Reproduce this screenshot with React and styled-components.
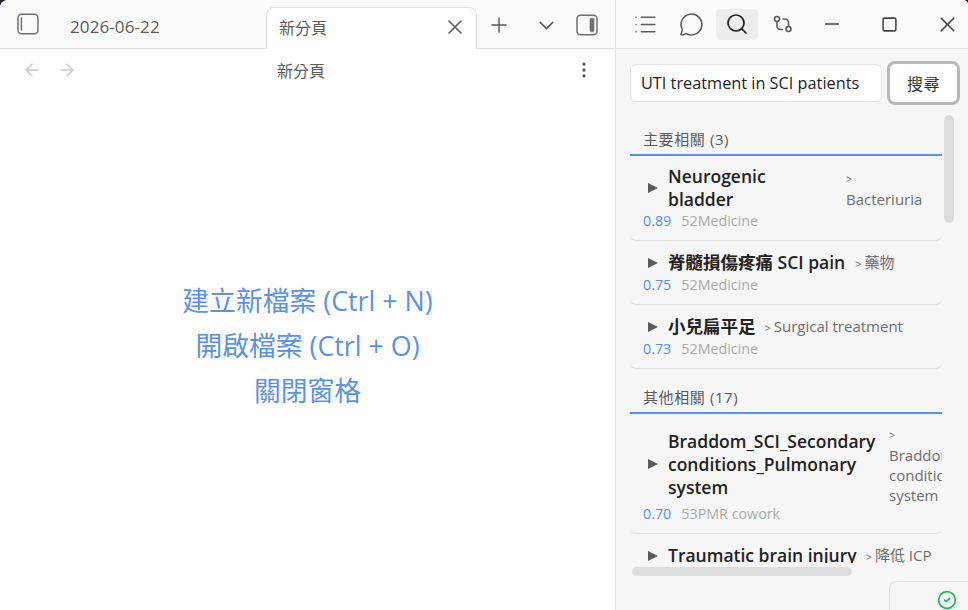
import styled, { createGlobalStyle } from "styled-components";
import {
  ArrowLeft,
  ArrowRight,
  ChevronDown,
  CircleCheck,
  EllipsisVertical,
  List,
  MessageCircle,
  Minus,
  Plus,
  Search,
  Square,
  X,
} from "lucide-react";

const GlobalStyle = createGlobalStyle`
  html, body {
    margin: 0;
    padding: 0;
    height: 100%;
    overflow: hidden;
    background: #1c2433;
  }
  #root {
    height: 100%;
  }
  * {
    box-sizing: border-box;
  }
`;

const Window = styled.div`
  width: 968px;
  height: 610px;
  display: flex;
  overflow: hidden;
  background: #fff;
  border-radius: 8px 5px 0 0;
  font-family: "Open Sans", "Noto Sans CJK TC", sans-serif;
  color: #5c5c5c;
`;

const MainPane = styled.div`
  width: 616px;
  flex-shrink: 0;
  display: flex;
  flex-direction: column;
  border-right: 1px solid #e3e3e3;
`;

const TabBar = styled.div`
  height: 49px;
  flex-shrink: 0;
  background: #fafafa;
  border-bottom: 1px solid #e0e0e0;
  display: flex;
  align-items: flex-end;
`;

const IconSlot = styled.div`
  width: ${(p) => p.$w || 34}px;
  height: 34px;
  display: flex;
  align-items: center;
  justify-content: center;
  flex-shrink: 0;
  color: ${(p) => p.$color || "#5c5c5c"};

  svg {
    flex-shrink: 0;
  }
`;

const TabBarLeft = styled.div`
  width: 266px;
  height: 48px;
  display: flex;
  align-items: center;
  padding-left: 11px;
  flex-shrink: 0;
`;

const DateTab = styled.span`
  margin: 5px 0 0 25px;
  font-size: 17px;
  letter-spacing: 0.1px;
  color: #5c5c5c;
`;

const ActiveTab = styled.div`
  width: 211px;
  height: 42px;
  margin-bottom: -1px;
  background: #fff;
  border: 1px solid #e0e0e0;
  border-bottom: none;
  border-radius: 8px 8px 0 0;
  display: flex;
  align-items: center;
  justify-content: space-between;
  padding: 0 9px 4px 12px;
  font-size: 16px;
  color: #5c5c5c;
`;

const TabBarRight = styled.div`
  flex: 1;
  height: 48px;
  display: flex;
  align-items: center;
  padding-left: 5px;
  padding-top: 2px;
`;

const PaneToggle = styled.div`
  display: flex;
`;

const NavBar = styled.div`
  height: 42px;
  display: grid;
  grid-template-columns: 1fr auto 1fr;
  align-items: center;
  padding: 0 21px 0 8px;
  flex-shrink: 0;
`;

const NavArrows = styled.div`
  display: flex;
  gap: 1px;
  padding-left: 7px;
`;

const NavMenu = styled.div`
  justify-self: end;
`;

const NavTitle = styled.div`
  font-size: 16px;
  color: #5c5c5c;
`;

const EmptyState = styled.div`
  flex: 1;
  display: flex;
  flex-direction: column;
  align-items: center;
  padding-top: 192px;
  gap: 9px;
`;

const EmptyAction = styled.div`
  font-size: 26.8px;
  line-height: 36px;
  color: #5a93e6;
`;

const SidePane = styled.div`
  flex: 1;
  min-width: 0;
  display: flex;
  flex-direction: column;
  background: #f6f6f6;
  position: relative;
`;

const SideHeader = styled.div`
  height: 49px;
  flex-shrink: 0;
  background: #fafafa;
  border-bottom: 1px solid #e0e0e0;
  display: flex;
  align-items: center;
  padding-left: 8px;
`;

const SideTab = styled.div`
  width: 42px;
  height: 31px;
  flex-shrink: 0;
  margin-right: 4px;
  border-radius: 4px;
  display: flex;
  align-items: center;
  justify-content: center;
  background: ${(p) => (p.$active ? "#ededed" : "transparent")};
  color: ${(p) => (p.$active ? "#222" : "#5c5c5c")};
`;

const WindowControls = styled.div`
  margin-left: auto;
  display: flex;
  align-items: center;
  gap: 9.5px;
`;

const WindowButton = styled.div`
  width: 46px;
  height: 47px;
  margin: 0 1px;
  display: flex;
  align-items: center;
  justify-content: center;
  color: #444;
`;

const SearchRow = styled.div`
  display: flex;
  align-items: center;
  padding: 12px 0 0 14px;
  gap: 5px;
  flex-shrink: 0;
`;

const SearchInput = styled.div`
  width: 252px;
  height: 38px;
  background: #fff;
  border: 1px solid #e3e3e3;
  border-radius: 6px;
  padding: 0 10px;
  display: flex;
  align-items: center;
  font-size: 16.3px;
  color: #222;
  white-space: nowrap;
`;

const SearchButton = styled.div`
  width: 73px;
  height: 44px;
  background: #fff;
  border: 3px solid #b8b8b8;
  border-radius: 8px;
  display: flex;
  align-items: center;
  justify-content: center;
  font-size: 16px;
  letter-spacing: 0.5px;
  color: #333;
`;

const Results = styled.div`
  margin: 6px 0 0 14px;
  width: 312px;
  height: 452px;
  overflow: hidden;
  flex-shrink: 0;
`;

const GroupHeading = styled.div`
  height: 45px;
  padding: 16.5px 0 0 13px;
  border-bottom: 2px solid #5a93e6;
  font-size: 15px;
  line-height: 22px;
  color: #5c5c5c;
  letter-spacing: 0.6px;
`;

const Item = styled.div`
  border-bottom: 1px solid #e3e3e3;
  border-radius: 0 0 6px 6px;
  padding: ${(p) => p.$pt}px 0 9px 13px;
`;

const ItemRow = styled.div`
  display: flex;
  align-items: center;
  overflow: hidden;
`;

const Arrow = styled.span`
  width: 0;
  height: 0;
  flex-shrink: 0;
  margin: 0 10px 0 5px;
  border-style: solid;
  border-width: 5.5px 0 5.5px 10px;
  border-color: transparent transparent transparent #5c5c5c;
`;

const ItemTitle = styled.div`
  font-size: 17.5px;
  line-height: 23px;
  font-weight: 600;
  color: #222;
  flex-shrink: 0;
  width: ${(p) => (p.$width ? `${p.$width}px` : "auto")};
  white-space: ${(p) => (p.$width ? "normal" : "nowrap")};
`;

const ItemPath = styled.div`
  margin-left: ${(p) => p.$gap}px;
  font-size: 15px;
  line-height: 20px;
  color: #6e6e6e;
  flex-shrink: ${(p) => (p.$fixed ? 0 : 1)};
  width: ${(p) => (p.$fixed ? `${p.$fixed}px` : "auto")};
  white-space: ${(p) => (p.$fixed ? "normal" : "nowrap")};
`;

const Chevron = styled.span`
  font-size: 11px;
  margin-right: 3px;
`;

const ItemMeta = styled.div`
  display: flex;
  gap: 10px;
  font-size: 14.3px;
  line-height: 20px;
  margin-top: ${(p) => p.$mt}px;
`;

const Score = styled.span`
  color: #5a93e6;
  font-weight: 500;
`;

const Source = styled.span`
  color: #ababab;
`;

const VerticalThumb = styled.div`
  position: absolute;
  left: 328px;
  top: 115px;
  width: 10px;
  height: 108px;
  border-radius: 5px;
  background: #dcdcdc;
`;

const HorizontalThumb = styled.div`
  position: absolute;
  left: 16px;
  top: 567px;
  width: 220px;
  height: 9px;
  border-radius: 5px;
  background: #dcdcdc;
`;

const StatusBadge = styled.div`
  position: absolute;
  right: 0;
  bottom: 0;
  width: 79px;
  height: 29px;
  background: #f6f6f6;
  border: 1px solid #e3e3e3;
  border-right: none;
  border-bottom: none;
  border-top-left-radius: 8px;
  display: flex;
  align-items: center;
  justify-content: flex-end;
  padding: 7px 11px 0 0;
  color: #1db954;
`;

// outgoing links icon, not the same as any package glyph
function LinksIcon() {
  return (
    <svg width="20" height="20" viewBox="0 0 20 20" fill="none" stroke="currentColor" strokeWidth="1.6" strokeLinecap="round">
      <circle cx="4" cy="5" r="2.5" />
      <circle cx="15.5" cy="15" r="2.5" />
      <path d="M4 7.5v4.5a3.5 3.5 0 0 0 3.5 3.5h2" />
      <path d="M15.5 12.5v-4a3.5 3.5 0 0 0-3.5-3.5h-2" />
    </svg>
  );
}

function SidebarLeftIcon() {
  return (
    <svg width="22" height="22" viewBox="0 0 22 22" fill="none" stroke="#707070">
      <rect x="1" y="1.2" width="20" height="19.6" rx="3.5" strokeWidth="1.5" />
      <path d="M4.4 5v12" strokeWidth="1.5" strokeLinecap="round" />
    </svg>
  );
}

function SidebarRightIcon() {
  return (
    <svg width="22" height="22" viewBox="0 0 22 22" fill="none" stroke="#707070">
      <rect x="1" y="1.2" width="20" height="19.6" rx="3.5" strokeWidth="1.5" />
      <rect x="14" y="4.2" width="4" height="13.6" rx="1.4" fill="#707070" strokeWidth="0.6" />
    </svg>
  );
}

const topResults = [
  {
    id: 1,
    title: "Neurogenic bladder",
    width: 150,
    path: "Bacteriuria",
    fixed: 90,
    gap: 28,
    score: "0.89",
    source: "52Medicine",
    pt: 9,
    mt: 0,
  },
  {
    id: 2,
    title: "脊髓損傷疼痛 SCI pain",
    path: "藥物",
    gap: 10,
    score: "0.75",
    source: "52Medicine",
    pt: 10,
    mt: 1,
  },
  {
    id: 3,
    title: "小兒扁平足",
    path: "Surgical treatment",
    gap: 9,
    score: "0.73",
    source: "52Medicine",
    pt: 10,
    mt: 1,
  },
];

const otherResults = [
  {
    id: 4,
    title: "Braddom_SCI_Secondary conditions_Pulmonary system",
    width: 212,
    path: "Braddom_SCI_Secondary conditions_Pulmonary system",
    fixed: 100,
    gap: 9,
    score: "0.70",
    source: "53PMR cowork",
    pt: 9,
    mt: -1,
  },
  {
    id: 5,
    title: "Traumatic brain injury",
    path: "降低 ICP",
    gap: 9,
    score: "0.68",
    source: "52Medicine",
    pt: 10,
    mt: 1,
  },
];

function ResultItem({ item }) {
  return (
    <Item $pt={item.pt}>
      <ItemRow>
        <Arrow />
        <ItemTitle $width={item.width}>{item.title}</ItemTitle>
        <ItemPath $gap={item.gap} $fixed={item.fixed}>
          {item.fixed ? (
            <>
              <Chevron>&gt;</Chevron>
              <br />
            </>
          ) : (
            <Chevron>&gt;</Chevron>
          )}
          {item.path}
        </ItemPath>
      </ItemRow>
      <ItemMeta $mt={item.mt}>
        <Score>{item.score}</Score>
        <Source>{item.source}</Source>
      </ItemMeta>
    </Item>
  );
}

export default function App() {
  return (
    <Window>
      <GlobalStyle />
      <MainPane>
        <TabBar>
          <TabBarLeft>
            <IconSlot>
              <SidebarLeftIcon />
            </IconSlot>
            <DateTab>2026-06-22</DateTab>
          </TabBarLeft>
          <ActiveTab>
            新分頁
            <X size={24} strokeWidth={1.6} />
          </ActiveTab>
          <TabBarRight>
            <IconSlot $w={34}>
              <Plus size={24} strokeWidth={1.5} />
            </IconSlot>
            <IconSlot $w={60}>
              <ChevronDown size={25} strokeWidth={1.5} />
            </IconSlot>
            <PaneToggle>
              <SidebarRightIcon />
            </PaneToggle>
          </TabBarRight>
        </TabBar>
        <NavBar>
          <NavArrows>
            <IconSlot $color="#c8c8c8">
              <ArrowLeft size={20} strokeWidth={1.8} />
            </IconSlot>
            <IconSlot $color="#c8c8c8">
              <ArrowRight size={20} strokeWidth={1.8} />
            </IconSlot>
          </NavArrows>
          <NavTitle>新分頁</NavTitle>
          <NavMenu>
            <IconSlot $w={20}>
              <EllipsisVertical size={20} strokeWidth={2} />
            </IconSlot>
          </NavMenu>
        </NavBar>
        <EmptyState>
          <EmptyAction>建立新檔案 (Ctrl + N)</EmptyAction>
          <EmptyAction>開啟檔案 (Ctrl + O)</EmptyAction>
          <EmptyAction>關閉窗格</EmptyAction>
        </EmptyState>
      </MainPane>
      <SidePane>
        <SideHeader>
          <SideTab>
            <List size={25} strokeWidth={1.4} />
          </SideTab>
          <SideTab>
            <MessageCircle size={25} strokeWidth={1.5} />
          </SideTab>
          <SideTab $active>
            <Search size={24} strokeWidth={1.7} />
          </SideTab>
          <SideTab>
            <LinksIcon />
          </SideTab>
          <WindowControls>
            <WindowButton>
              <Minus size={22} strokeWidth={1.6} />
            </WindowButton>
            <WindowButton>
              <Square size={17} strokeWidth={2.2} />
            </WindowButton>
            <WindowButton>
              <X size={25} strokeWidth={1.6} />
            </WindowButton>
          </WindowControls>
        </SideHeader>
        <SearchRow>
          <SearchInput>UTI treatment in SCI patients</SearchInput>
          <SearchButton>搜尋</SearchButton>
        </SearchRow>
        <Results>
          <GroupHeading>主要相關 (3)</GroupHeading>
          {topResults.map((item) => (
            <ResultItem key={item.id} item={item} />
          ))}
          <GroupHeading>其他相關 (17)</GroupHeading>
          {otherResults.map((item) => (
            <ResultItem key={item.id} item={item} />
          ))}
        </Results>
        <VerticalThumb />
        <HorizontalThumb />
        <StatusBadge>
          <CircleCheck size={20} strokeWidth={2} />
        </StatusBadge>
      </SidePane>
    </Window>
  );
}
